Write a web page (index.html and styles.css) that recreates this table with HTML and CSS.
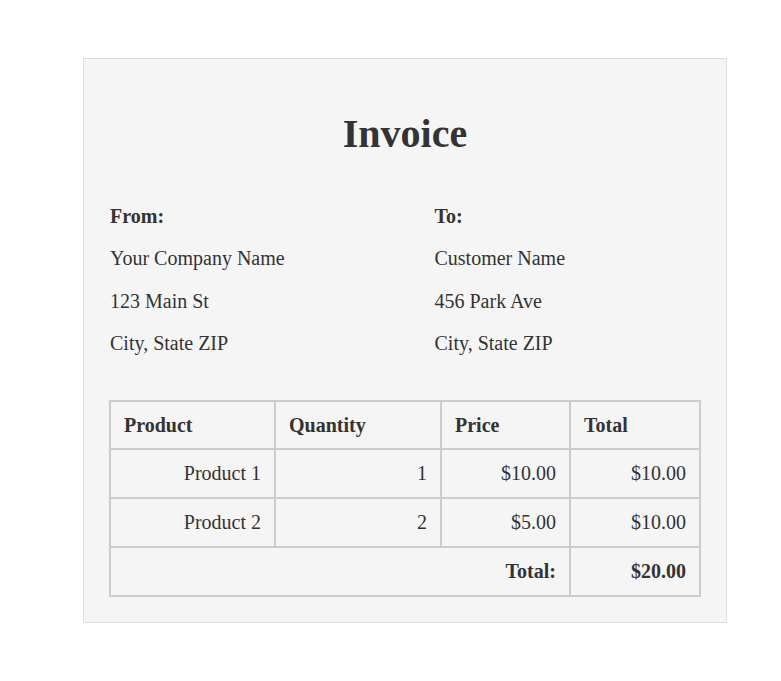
FILE: index.html
```html
<!DOCTYPE html>
<html>
<head>
<meta charset="utf-8">
<link rel="stylesheet" href="styles.css">
</head>
<body>
<div class="invoice">
  <h1 class="title">Invoice</h1>
  <div class="parties">
    <div class="party">
      <p class="label">From:</p>
      <p>Your Company Name</p>
      <p>123 Main St</p>
      <p>City, State ZIP</p>
    </div>
    <div class="party">
      <p class="label">To:</p>
      <p>Customer Name</p>
      <p>456 Park Ave</p>
      <p>City, State ZIP</p>
    </div>
  </div>
  <table class="items">
    <colgroup>
      <col class="c1"><col class="c2"><col class="c3"><col class="c4">
    </colgroup>
    <thead>
      <tr><th>Product</th><th>Quantity</th><th>Price</th><th>Total</th></tr>
    </thead>
    <tbody>
      <tr><td>Product 1</td><td>1</td><td>$10.00</td><td>$10.00</td></tr>
      <tr><td>Product 2</td><td>2</td><td>$5.00</td><td>$10.00</td></tr>
      <tr class="sum"><td colspan="3">Total:</td><td>$20.00</td></tr>
    </tbody>
  </table>
</div>
</body>
</html>
```
FILE: styles.css
```css
body {
  margin: 8px;
  background: #ffffff;
  font-family: "Liberation Serif", "Times New Roman", serif;
  font-size: 20px;
  color: #333333;
}
.invoice {
  width: 590px;
  margin: 50px 0 0 75px;
  padding: 24px 26px 25px 26px;
  background: #f5f5f5;
  border: 1px solid #dddddd;
}
.title {
  margin: 28px 0 28px;
  font-size: 40px;
  font-weight: bold;
  text-align: center;
  line-height: 46px;
}
.parties {
  display: flex;
  justify-content: space-between;
}
.party {
  width: 45%;
}
.party p {
  margin: 19.5px 0;
  line-height: 23px;
}
.party .label {
  font-weight: bold;
}
.items {
  width: 590px;
  margin: 25px 0 0 -1px;
  border-collapse: collapse;
  table-layout: fixed;
}
.c1 { width: 165px; }
.c2 { width: 166px; }
.c3 { width: 129px; }
.c4 { width: 130px; }
.items th,
.items td {
  border: 2px solid #cccccc;
  padding: 12px 13px 11.75px;
  line-height: 23px;
  font-size: 20px;
}
.items th {
  text-align: left;
  font-weight: bold;
}
.items td {
  text-align: right;
}
.items .sum td {
  font-weight: bold;
}
```
